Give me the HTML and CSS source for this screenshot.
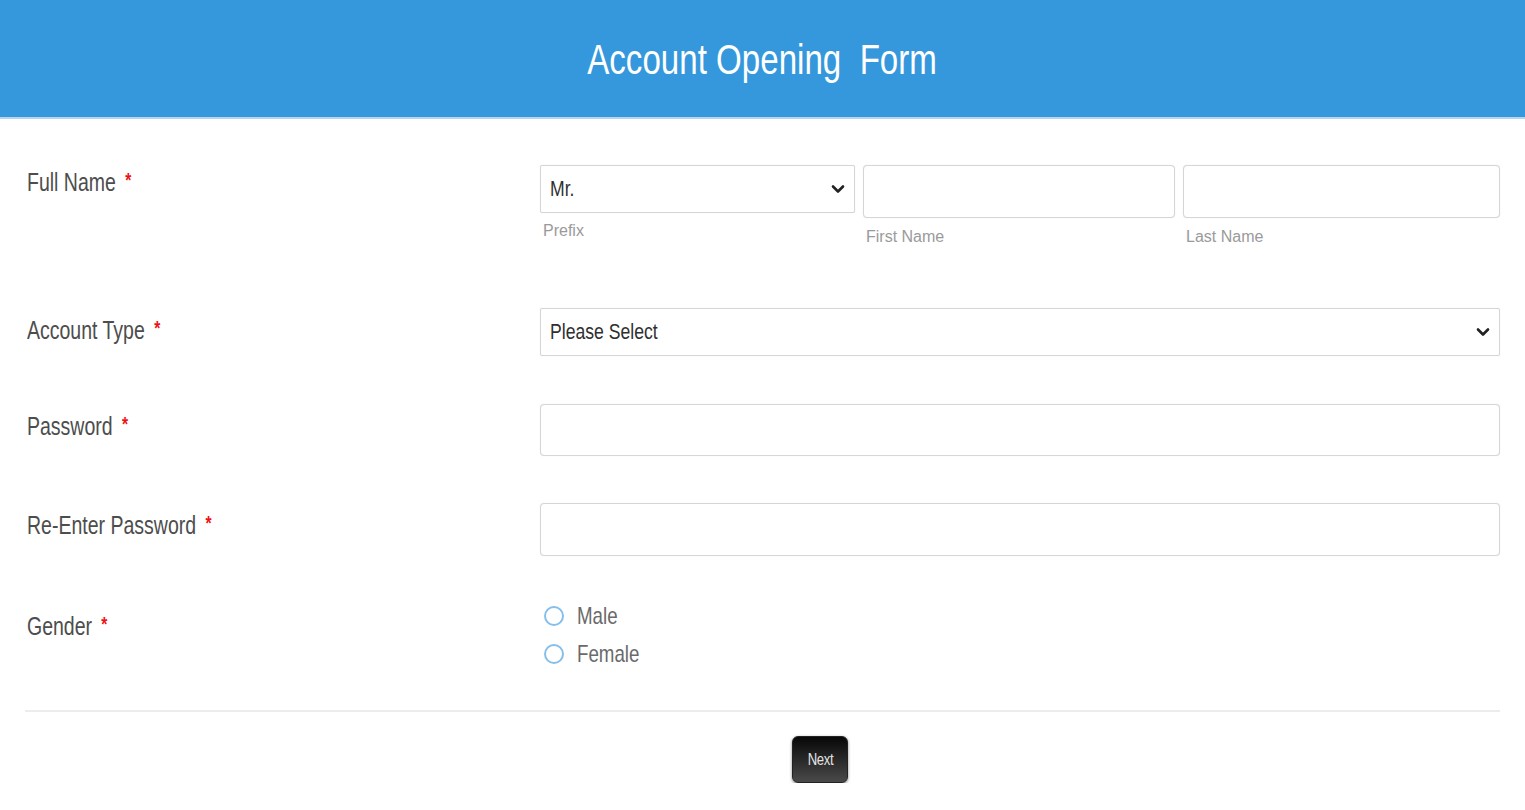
FILE: index.html
```html
<!DOCTYPE html>
<html lang="en">
<head>
<meta charset="utf-8">
<title>Account Opening Form</title>
<link rel="stylesheet" href="styles.css">
</head>
<body>
<header class="header">
  <h1 class="title"><span class="sx sx-title">Account Opening&nbsp; Form</span></h1>
</header>
<main class="form">
  <div class="row row-name">
    <div class="label lbl-name"><span class="sx sx-label">Full Name <span class="req">*</span></span></div>
    <div class="name-grid">
      <div class="field">
        <div class="select select-prefix">
          <span class="sx sx-select">Mr.</span>
          <svg class="chev" width="14" height="10" viewBox="0 0 14 10"><path d="M2 2.5 L7 7.5 L12 2.5" fill="none" stroke="#222" stroke-width="2.6" stroke-linecap="round" stroke-linejoin="round"/></svg>
        </div>
        <div class="help help-prefix">Prefix</div>
      </div>
      <div class="field">
        <div class="input input-name"></div>
        <div class="help">First Name</div>
      </div>
      <div class="field">
        <div class="input input-name"></div>
        <div class="help">Last Name</div>
      </div>
    </div>
  </div>

  <div class="row row-account">
    <div class="label"><span class="sx sx-label">Account Type <span class="req">*</span></span></div>
    <div class="select select-wide">
      <span class="sx sx-select">Please Select</span>
      <svg class="chev" width="14" height="10" viewBox="0 0 14 10"><path d="M2 2.5 L7 7.5 L12 2.5" fill="none" stroke="#222" stroke-width="2.6" stroke-linecap="round" stroke-linejoin="round"/></svg>
    </div>
  </div>

  <div class="row row-pass">
    <div class="label"><span class="sx sx-label">Password <span class="req">*</span></span></div>
    <div class="input input-pass"></div>
  </div>

  <div class="row row-repass">
    <div class="label"><span class="sx sx-label">Re-Enter Password <span class="req">*</span></span></div>
    <div class="input input-repass"></div>
  </div>

  <div class="row row-gender">
    <div class="label lbl-gender"><span class="sx sx-label">Gender <span class="req">*</span></span></div>
    <div class="radios">
      <div class="radio"><span class="circle"></span><span class="sx sx-radio">Male</span></div>
      <div class="radio"><span class="circle"></span><span class="sx sx-radio">Female</span></div>
    </div>
  </div>

  <div class="divider"></div>

  <div class="footer">
    <button class="btn" type="button"><span class="sx sx-btn">Next</span></button>
  </div>
</main>
</body>
</html>
```

FILE: styles.css
```css
* { box-sizing: border-box; }

html, body {
  margin: 0;
  padding: 0;
  background: #ffffff;
  font-family: "Liberation Sans", Arial, sans-serif;
}

.sx {
  display: inline-block;
  white-space: nowrap;
  transform-origin: left center;
}

.header {
  height: 119px;
  background: #3598dc;
  border-bottom: 2px solid #b3d5ef;
  display: flex;
  align-items: center;
  justify-content: center;
  padding-top: 2px;
}

.title {
  margin: 0;
  font-weight: normal;
  font-size: 43px;
  line-height: 1;
  color: #ffffff;
}

.sx-title {
  transform: scaleX(0.77);
  transform-origin: center center;
}

.form {
  padding: 46px 25px 0 25px;
}

.row {
  display: grid;
  grid-template-columns: 515px 1fr;
  align-items: start;
}

.label {
  padding-left: 2px;
  padding-top: 5px;
  font-size: 25px;
  line-height: 30px;
  color: #4d4d4d;
}

.lbl-name { padding-top: 0; }
.lbl-gender { padding-top: 12px; }

.sx-label { transform: scaleX(0.78); }

.req {
  color: #ee1111;
  font-size: 20px;
  font-weight: bold;
  vertical-align: 4px;
  margin-left: 5px;
}

.row-name { margin-bottom: 61px; }
.row-account { margin-bottom: 48px; }
.row-pass { margin-bottom: 47px; }
.row-repass { margin-bottom: 41px; }

.name-grid {
  display: grid;
  grid-template-columns: 315px 312px 1fr;
  gap: 8px;
}

.field {
  display: flex;
  flex-direction: column;
}

.select {
  height: 48px;
  border: 1px solid #d6d6d6;
  border-radius: 2px;
  box-shadow: 0 0 1px rgba(0, 0, 0, 0.15);
  display: flex;
  align-items: center;
  justify-content: space-between;
  padding: 0 9px;
  background: #fff;
  font-size: 22px;
  color: #2f2f2f;
}

.sx-select { transform: scaleX(0.8); }

.chev { display: block; flex: none; }

.input {
  height: 53px;
  border: 1px solid #d6d6d6;
  border-radius: 4px;
  box-shadow: 0 0 1px rgba(0, 0, 0, 0.15);
  background: #fff;
}

.input-pass { height: 52px; }

.help {
  margin-top: 9px;
  padding-left: 3px;
  font-size: 16px;
  line-height: 20px;
  color: #9a9a9a;
}

.help-prefix { margin-top: 8px; }

.radios {
  display: flex;
  flex-direction: column;
  padding-left: 4px;
}

.radio {
  display: flex;
  align-items: center;
  height: 38px;
  font-size: 24px;
  color: #6a6a6a;
}

.circle {
  width: 20px;
  height: 20px;
  border: 2px solid #86bfe9;
  border-radius: 50%;
  margin-right: 13px;
  flex: none;
  background: #fff;
}

.sx-radio { transform: scaleX(0.78); }

.divider {
  margin-top: 37px;
  border-top: 2px solid #ececec;
}

.footer {
  display: flex;
  justify-content: center;
  padding-left: 115px;
  padding-top: 24px;
}

.btn {
  width: 56px;
  height: 47px;
  border: 1px solid #222;
  border-radius: 6px;
  background: linear-gradient(#070707, #4a4a4a);
  box-shadow: 0 1px 3px rgba(0, 0, 0, 0.5);
  color: #e4e4e4;
  font-family: "Liberation Sans", Arial, sans-serif;
  font-size: 16px;
  padding: 0;
  display: flex;
  align-items: center;
  justify-content: center;
}

.sx-btn {
  transform: scaleX(0.82);
  transform-origin: center center;
  letter-spacing: -0.5px;
}
```
